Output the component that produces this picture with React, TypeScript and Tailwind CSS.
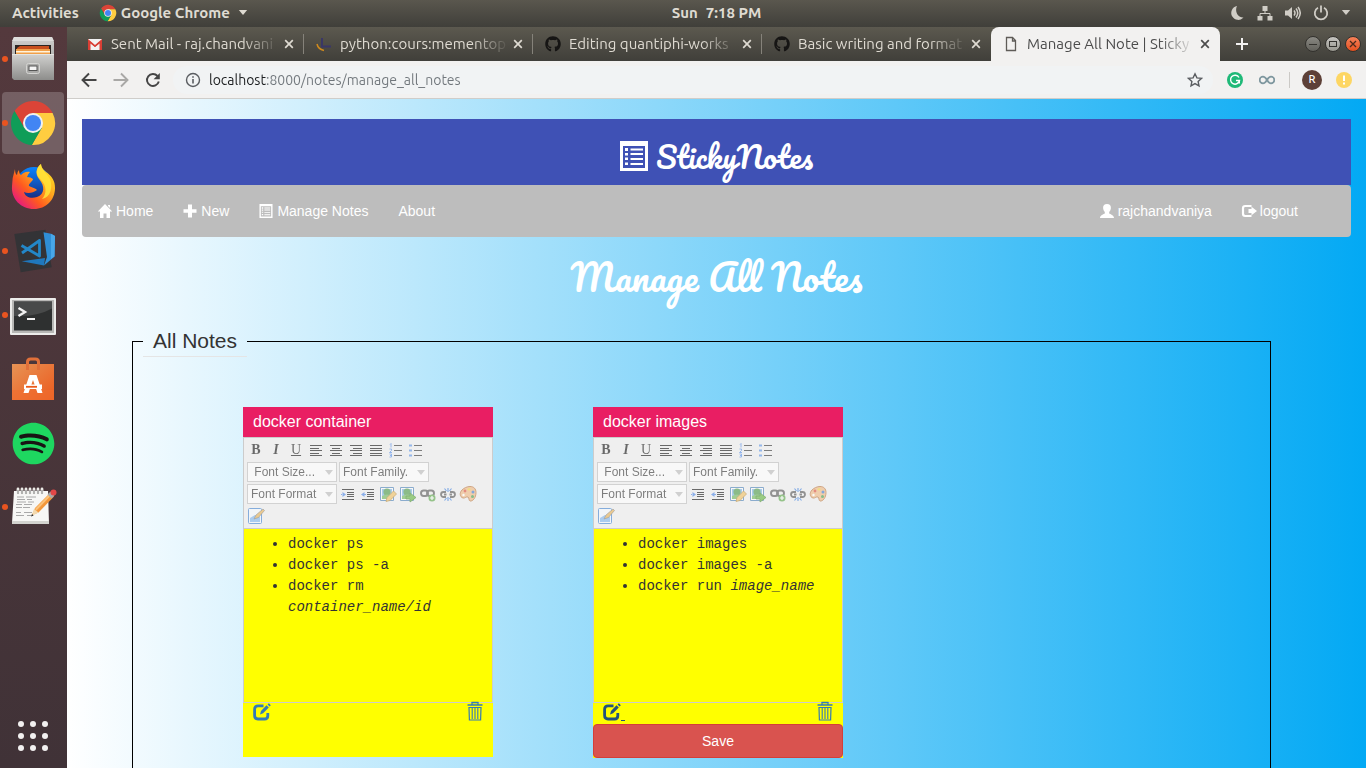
import type { ReactNode } from "react";
import { FaGithub, FaSpotify } from "react-icons/fa";

const uiFont = "font-['Ubuntu','Open_Sans','Noto_Sans',sans-serif]";

/* ---------- Shared logos ---------- */

function ChromeLogo({ className }: { className: string }) {
  return (
    <svg viewBox="0 0 48 48" className={className} aria-hidden="true">
      <path d="M5.55 12.02A22 22 0 0 1 43.6 14H24L15.34 29Z" fill="#db4437" />
      <path d="M43.6 14A22 22 0 0 1 22.85 45.97L32.66 29L24 14Z" fill="#ffcd40" />
      <path d="M22.85 45.97A22 22 0 0 1 5.55 12.02L15.34 29H32.66Z" fill="#0f9d58" />
      <circle cx="24" cy="24" r="10" fill="#f1f1f1" />
      <circle cx="24" cy="24" r="8" fill="#4285f4" />
    </svg>
  );
}

/* ---------- Desktop top bar ---------- */

function TopBar() {
  return (
    <header className={`grid h-[27px] shrink-0 grid-cols-[1fr_auto_1fr] items-center bg-linear-to-b from-[#5a574e] to-[#403f3a] pb-0.5 text-[15px] leading-5 font-bold text-[#dfdbd2] ${uiFont}`}>
      <div className="flex items-center">
        <button className="pl-3">Activities</button>
        <button className="ml-5 flex items-center gap-1">
          <ChromeLogo className="size-[18px]" />
          <span>Google Chrome</span>
          <svg viewBox="0 0 10 6" className="ml-1 h-[5px] w-[10px]" aria-hidden="true">
            <path d="M0 0h10L5 6z" fill="#dfdbd2" />
          </svg>
        </button>
      </div>
      <button className="flex gap-2 pl-[67px]">
        <span>Sun</span>
        <span>7:18 PM</span>
      </button>
      <div className="flex items-center justify-end gap-3 pr-[15px]">
        <svg viewBox="0 0 16 16" className="size-4" aria-label="Night mode">
          <path d="M8 1A7 7 0 1 0 14.5 12.5C8.500 13 5.500 6 8 1z" fill="#d0cdc6" />
        </svg>
        <svg viewBox="0 0 16 16" className="size-4" aria-label="Network">
          <path d="M5.500 1h5v5h-5zM0.500 11h5v4.500h-5zM10.500 11h5v4.500h-5z" fill="#d0cdc6" />
          <path d="M8 6v2.500M3 11V8.500h10V11" fill="none" stroke="#d0cdc6" />
        </svg>
        <svg viewBox="0 0 16 16" className="size-4" aria-label="Volume">
          <path d="M0 5.500h3L7 2v12L3 10.500H0z" fill="#d0cdc6" />
          <path d="M9 5.500q2 2.500 0 5M11 3.500q3.500 4.500 0 9M13 2q4.500 6 0 12" fill="none" stroke="#d0cdc6" strokeWidth="1.500" />
        </svg>
        <svg viewBox="0 0 16 16" className="size-4" aria-label="Power">
          <path d="M5 2.800a6.200 6.200 0 1 0 6 0M8 0.500v7" fill="none" stroke="#d0cdc6" strokeWidth="1.800" />
        </svg>
        <svg viewBox="0 0 10 6" className="h-[5px] w-[10px]" aria-hidden="true">
          <path d="M0 0h10L5 6z" fill="#d0cdc6" />
        </svg>
      </div>
    </header>
  );
}

/* ---------- Dock ---------- */

function FilesIcon() {
  return (
    <svg viewBox="0 0 48 48" className="size-12" aria-hidden="true">
      <defs>
        <linearGradient id="cab" x1="0" y1="0" x2="0" y2="1">
          <stop offset="0" stopColor="#d2d2d0" />
          <stop offset="1" stopColor="#8d8d8b" />
        </linearGradient>
      </defs>
      <path d="M5 2h38l2 5v36H3V7z" fill="url(#cab)" />
      <path d="M5 2h38l2 4H3z" fill="#dededc" />
      <rect x="6" y="10" width="36" height="12" fill="#2c2623" />
      <path d="M8 13l3-2h29v9H8z" fill="#c8501e" />
      <path d="M7 14h34v7H7z" fill="#f0a04a" />
      <path d="M7 16h34v1.500H7z" fill="#fff3dc" />
      <path d="M3 19h42v26H5l-2-2z" fill="url(#cab)" />
      <path d="M3 19h42v1H3z" fill="#e4e4e2" />
      <rect x="17.500" y="28.500" width="13" height="10" rx="2" fill="#a9a9a7" stroke="#d5d5d3" />
      <rect x="20" y="31" width="8" height="4.500" fill="#f4f4f4" stroke="#555" />
    </svg>
  );
}

function FirefoxIcon() {
  return (
    <svg viewBox="0 0 48 48" className="size-12" aria-hidden="true">
      <defs>
        <linearGradient id="fxBody" x1="0.900" y1="0.100" x2="0.100" y2="0.900">
          <stop offset="0" stopColor="#ffe226" />
          <stop offset="0.350" stopColor="#ffa51e" />
          <stop offset="0.650" stopColor="#ff5a1f" />
          <stop offset="1" stopColor="#e31587" />
        </linearGradient>
        <linearGradient id="fxGlobe" x1="0" y1="0" x2="0" y2="1">
          <stop offset="0" stopColor="#0a84ff" />
          <stop offset="1" stopColor="#1c2170" />
        </linearGradient>
      </defs>
      <circle cx="25" cy="22" r="18" fill="url(#fxGlobe)" />
      <path d="M6 6Q3 15 3 23C2 36 12 46 25 46C37 46 46 37 46 25C46 18 43 13 37 9Q32 5 32 1C27 5 26 11 30 16C36 23 36 31 28 34C22 36 16 34 15 29C19 31 24 30 28 27C25 24 23 25 20 23C19 21 24 18 24 16Q22 14 18 14Q19 11 21 9C17 8 14 10 12 12Q10 11 10 7Q8 9 8 12Q6 11 6 6Z" fill="url(#fxBody)" />
      <path d="M32 1C27 5 26 11 31 16C38 22 38 31 33 36C42 34 44 24 41 16C38 10 32 7 32 1Z" fill="#ffe43a" opacity="0.850" />
    </svg>
  );
}

function CodeIcon() {
  return (
    <svg viewBox="0 0 48 48" className="size-12" aria-hidden="true">
      <path d="M5.300 7L36.500 2.700L42.700 40.300L11.700 45.300Z" fill="#333336" />
      <path d="M12.700 34.300L36 31L35 38.500Z" fill="#1f78bd" />
      <path d="M34.500 5.300L42 6.700L46 9L45.500 29.500L35 38.500L38 30Z" fill="#2f8fd6" />
      <path d="M42 6.700L46 9L45.500 29.500L42 32Z" fill="#48a6e8" />
      <path d="M12.500 18.500L30.500 29V13.500L13 26" fill="none" stroke="#2387c8" strokeWidth="2.800" strokeLinejoin="round" />
    </svg>
  );
}

function TerminalIcon() {
  return (
    <svg viewBox="0 0 48 48" className="size-12" aria-hidden="true">
      <rect x="1" y="7" width="46" height="37" rx="1" fill="#ececea" />
      <rect x="3" y="9" width="42" height="33" fill="#b7b7b5" />
      <rect x="5" y="10.500" width="38" height="29" fill="#2e3030" />
      <path d="M5 10.500h38v7Q28 26 5 25z" fill="#484a4a" />
      <path d="M9.500 17l6.500 4-6.500 4" fill="none" stroke="#f2f2f2" strokeWidth="2.400" />
      <path d="M18 28h8" stroke="#f2f2f2" strokeWidth="2" />
    </svg>
  );
}

function SoftwareIcon() {
  return (
    <svg viewBox="0 0 48 48" className="size-12" aria-hidden="true">
      <defs>
        <linearGradient id="bag" x1="0" y1="0" x2="1" y2="1">
          <stop offset="0" stopColor="#e79355" />
          <stop offset="1" stopColor="#ec5a1d" />
        </linearGradient>
      </defs>
      <path d="M3 9h42v36H3z" fill="url(#bag)" />
      <path d="M3 35h42v10H3z" fill="#f06c2e" opacity="0.600" />
      <path d="M18.500 15V7q0-3 3-3h5q3 0 3 3v8" fill="none" stroke="#e0703a" strokeWidth="3" />
      <path d="M20.500 20h7l6 18h-5l-4.500-13-4.500 13h-5z" fill="#fff" />
      <path d="M15 29.500h18v4.500H15z" fill="#fff" />
      <path d="M17 31.800h11" stroke="#ea5a1a" strokeWidth="1.800" />
    </svg>
  );
}

function NotepadIcon() {
  return (
    <svg viewBox="0 0 48 48" className="size-12" aria-hidden="true">
      <path d="M5 8h34l1 32H3z" fill="#f7f7f5" />
      <path d="M3 38h37v3H3z" fill="#d3d3cf" />
      <path d="M8 14h7m2 0h10M8 16.500h8m2 0h5M8 19h9m2 0h6M7 21.500h6m2 0h8M7 24.500h6m1 0h7M7 29.500h5m3 0h8M7 32.500h8m3 0h4" stroke="#a9a9a9" strokeWidth="1" />
      <path d="M9 6v4M13 6v4M17 6v4M21 6v4M25 6v4M29 6v4M33 6v4" stroke="#ecece8" strokeWidth="2.800" strokeLinecap="round" />
      <path d="M9 7v4M13 7v4M17 7v4M21 7v4M25 7v4M29 7v4M33 7v4" stroke="#777" strokeWidth="1" />
      <path d="M23 32l3-7 15-15 4 3.500-15.500 16z" fill="#f3973a" />
      <path d="M26 26l15-15.500 1.500 1.500-15 15.500z" fill="#fbc27a" />
      <path d="M22.500 33l2.500-7 4.500 3.500z" fill="#f3d9ae" />
      <path d="M22 33.500l1-2.500 1.600 1.600z" fill="#222" />
      <path d="M38.500 11.500l3-3 4 4-3 3z" fill="#aaa" />
      <circle cx="44.500" cy="9.500" r="3" fill="#e24747" />
    </svg>
  );
}

const dockItems: { name: string; running: boolean; active?: boolean; icon: ReactNode }[] = [
  { name: "Files", running: true, icon: <FilesIcon /> },
  { name: "Google Chrome", running: true, active: true, icon: <ChromeLogo className="size-12" /> },
  { name: "Firefox", running: false, icon: <FirefoxIcon /> },
  { name: "Visual Studio Code", running: true, icon: <CodeIcon /> },
  { name: "Terminal", running: true, icon: <TerminalIcon /> },
  { name: "Ubuntu Software", running: false, icon: <SoftwareIcon /> },
  {
    name: "Spotify",
    running: false,
    icon: (
      <span className="block bg-[radial-gradient(closest-side,#191414_85%,transparent_86%)]">
        <FaSpotify className="block size-[43px] text-[#1ed760]" />
      </span>
    ),
  },
  { name: "Text Editor", running: true, icon: <NotepadIcon /> },
];

function Dock() {
  return (
    <nav aria-label="Dock" className="flex w-[67px] shrink-0 flex-col justify-between bg-linear-to-b from-[#54393d] to-[#403237] pt-px pb-[17px]">
      <ul className="flex flex-col gap-0.5">
        {dockItems.map((item) => (
          <li key={item.name}>
            <button
              aria-label={item.name}
              className={`relative ml-0.5 flex size-[62px] items-center justify-center rounded ${item.active ? "bg-white/20" : ""}`}
            >
              {item.running && <span className="absolute top-[28px] left-0 size-1.5 rounded-full bg-[#e95420]" />}
              {item.icon}
            </button>
          </li>
        ))}
      </ul>
      <button aria-label="Show Applications" className="ml-[18px] grid w-fit grid-cols-3 gap-1.5">
        {Array.from({ length: 9 }, (_, i) => (
          <span key={i} className="size-1.5 rounded-full bg-[#f2f0f0]" />
        ))}
      </button>
    </nav>
  );
}

/* ---------- Browser chrome ---------- */

function GmailIcon() {
  return (
    <svg viewBox="0 0 16 16" className="size-4" aria-hidden="true">
      <path d="M1 3h14v11H1z" fill="#f2f2f2" />
      <path d="M1 14V4l7 5.500L15 4v10h-2.500V7.500L8 11 3.500 7.500V14z" fill="#d93f35" />
      <path d="M1 3l7 6 7-6v2l-7 6-7-6z" fill="#d93f35" />
    </svg>
  );
}

function SwooshIcon() {
  return (
    <svg viewBox="0 0 16 16" className="size-4" aria-hidden="true">
      <path d="M6 2v8.500h9" fill="none" stroke="#3a3766" strokeWidth="2" />
      <path d="M1 8q1 5 7 6.500" fill="none" stroke="#d08a1c" strokeWidth="1.500" />
    </svg>
  );
}

function PageIcon() {
  return (
    <svg viewBox="0 0 16 16" className="size-4" aria-hidden="true">
      <path d="M3.500 1.500h6l3 3v10h-9zM9.500 1.500v3.500h3" fill="none" stroke="#5f5c58" strokeWidth="1.300" />
    </svg>
  );
}

const tabs: { title: string; icon: ReactNode; active?: boolean }[] = [
  { title: "Sent Mail - raj.chandvani", icon: <GmailIcon /> },
  { title: "python:cours:mementop", icon: <SwooshIcon /> },
  { title: "Editing quantiphi-works", icon: <FaGithub className="size-4 text-[#161514]" /> },
  { title: "Basic writing and format", icon: <FaGithub className="size-4 text-[#161514]" /> },
  { title: "Manage All Note | Sticky", icon: <PageIcon />, active: true },
];

function TabStrip() {
  return (
    <div className={`flex h-[34px] shrink-0 items-stretch bg-linear-to-b from-[#5c594f] to-[#403f3a] pl-2 text-[15px] leading-5 ${uiFont}`}>
      {tabs.map((tab, i) => (
        <div
          key={tab.title}
          className={`flex max-w-[229px] min-w-0 flex-1 items-center ${
            tab.active ? "rounded-t-lg bg-[#f2f1f0] text-[#4c4c4c]" : "text-[#dfdbd2]"
          }`}
        >
          <a href="#" className="flex min-w-0 flex-1 items-center gap-2 pl-3">
            <span className="shrink-0">{tab.icon}</span>
            <span className="min-w-0 flex-1 overflow-hidden whitespace-nowrap [mask-image:linear-gradient(to_right,black_78%,transparent)]">
              {tab.title}
            </span>
          </a>
          <button aria-label="Close tab" className="ml-1 pr-[9px]">
            <svg viewBox="0 0 10 10" className="size-2.5">
              <path d="M1.200 1.200l7.600 7.600M8.800 1.200L1.200 8.800" stroke="currentColor" strokeWidth="1.700" />
            </svg>
          </button>
          <span className={`h-5 w-px ${i < 3 ? "bg-[#85827a]" : ""}`} />
        </div>
      ))}
      <button aria-label="New tab" className="px-4 text-[#f2f1f0]">
        <svg viewBox="0 0 12 12" className="size-3">
          <path d="M6 0v12M0 6h12" stroke="currentColor" strokeWidth="2" />
        </svg>
      </button>
      <div className="ml-auto flex items-center gap-1 pr-[5px]">
        <button aria-label="Minimize" className="flex size-4 items-center justify-center rounded-full border border-[#33322e] bg-linear-to-b from-[#8a8983] to-[#62615b]">
          <span className="h-px w-2 bg-[#33322e]" />
        </button>
        <button aria-label="Maximize" className="flex size-4 items-center justify-center rounded-full border border-[#33322e] bg-linear-to-b from-[#c6c5c1] to-[#98978f]">
          <span className="h-1.5 w-2 border border-[#33322e]" />
        </button>
        <button aria-label="Close" className="flex size-4 items-center justify-center rounded-full border border-[#33322e] bg-linear-to-b from-[#f68158] to-[#e3501d]">
          <svg viewBox="0 0 8 8" className="size-2">
            <path d="M1 1l6 6M7 1L1 7" stroke="#4a2a1c" strokeWidth="1.300" />
          </svg>
        </button>
      </div>
    </div>
  );
}

function AddressBar() {
  return (
    <div className={`flex h-[38px] shrink-0 items-center border-b border-[#cfcdca] bg-[#f2f1f0] pr-[14px] pl-3.5 text-sm ${uiFont}`}>
      <div className="flex items-center gap-4">
        <button aria-label="Back" className="text-[#454545]">
          <svg viewBox="0 0 16 16" className="size-4">
            <path d="M15.500 8H2M8 1.500L1.500 8 8 14.500" fill="none" stroke="currentColor" strokeWidth="1.900" />
          </svg>
        </button>
        <button aria-label="Forward" className="text-[#a9a8a6]">
          <svg viewBox="0 0 16 16" className="size-4">
            <path d="M0.500 8H14M8 1.500L14.500 8 8 14.500" fill="none" stroke="currentColor" strokeWidth="1.900" />
          </svg>
        </button>
        <button aria-label="Reload" className="text-[#454545]">
          <svg viewBox="0 0 16 16" className="size-4">
            <path d="M13.800 9.500A6 6 0 1 1 12.500 4" fill="none" stroke="currentColor" strokeWidth="1.900" />
            <path d="M14.800 1v6.200H8.600z" fill="currentColor" />
          </svg>
        </button>
      </div>
      <div className="ml-3 flex h-7 flex-1 items-center gap-2 rounded-full bg-[#f1f3f4] pr-2.5 pl-3">
        <svg viewBox="0 0 16 16" className="size-4 shrink-0" aria-label="Site information">
          <circle cx="8" cy="8" r="6.500" fill="none" stroke="#5a5d61" strokeWidth="1.400" />
          <path d="M8 7v4.500M8 4.200v1.600" stroke="#5a5d61" strokeWidth="1.600" />
        </svg>
        <input
          aria-label="Address"
          defaultValue="localhost:8000/notes/manage_all_notes"
          className="min-w-0 flex-1 bg-[linear-gradient(to_right,#1c1e20_58px,#70767b_58px)] bg-clip-text text-transparent outline-none"
        />
        <button aria-label="Bookmark this page">
          <svg viewBox="0 0 16 16" className="size-4">
            <path d="M8 1.800l1.900 4.100 4.500.5-3.300 3 .9 4.400L8 11.600l-4 2.200.9-4.400-3.300-3 4.500-.5z" fill="none" stroke="#5a5d61" strokeWidth="1.400" />
          </svg>
        </button>
      </div>
      <div className="flex items-center pl-3.5">
        <button aria-label="Grammarly">
          <svg viewBox="0 0 16 16" className="size-4">
            <circle cx="8" cy="8" r="8" fill="#1fb978" />
            <path d="M12 5.500A4.500 4.500 0 1 0 12.500 8.500H9M12.300 8.500v3" fill="none" stroke="#fff" strokeWidth="1.400" />
          </svg>
        </button>
        <button aria-label="Infinity" className="ml-4">
          <svg viewBox="0 0 16 16" className="size-4">
            <path d="M8 8C6.500 5.500 5.500 4.700 4 4.700a3.300 3.300 0 0 0 0 6.600C5.500 11.300 6.500 10.500 8 8S10.500 4.700 12 4.700a3.300 3.300 0 0 1 0 6.600C10.500 11.300 9.500 10.500 8 8z" fill="none" stroke="#7f979f" strokeWidth="1.700" />
          </svg>
        </button>
        <span className="ml-3.5 h-4 w-px bg-[#cbc9c6]" />
        <button aria-label="Profile" className="ml-3 flex size-5 items-center justify-center rounded-full bg-[#5d4037] text-[11px] font-medium text-white">
          R
        </button>
        <button aria-label="Update" className="ml-3.5">
          <svg viewBox="0 0 16 16" className="size-4">
            <circle cx="8" cy="8" r="8" fill="#fdd663" />
            <path d="M8 3.500v5.500M8 10.500v2" stroke="#fff" strokeWidth="2" />
          </svg>
        </button>
      </div>
    </div>
  );
}

/* ---------- Page icons ---------- */

function ListIcon({ className }: { className: string }) {
  return (
    <svg viewBox="0 0 28 30" className={className} aria-hidden="true">
      <path
        fillRule="evenodd"
        fill="currentColor"
        d="M0 0h28v30H0zM3 5v22h22V5zM5 7h3v3H5zM10.500 7.500H23v2H10.500zM5 12h3v2.500H5zM10.500 12H23v2H10.500zM5 16.500h3V19H5zM10.500 17H23v2H10.500zM5 21.500h3V24H5zM10.500 22H23v2H10.500z"
      />
    </svg>
  );
}

function HomeIcon() {
  return (
    <svg viewBox="0 0 14 14" className="size-3.5" aria-hidden="true">
      <path d="M7 0l7.300 7.600H12V14H8.500V9.500h-3V14H2V7.600H-.3zM10 1h2v3l-2-2z" fill="currentColor" />
    </svg>
  );
}

function PlusIcon() {
  return (
    <svg viewBox="0 0 14 14" className="size-3.5" aria-hidden="true">
      <path d="M5 .5h4v4.700h4.500v3.600H9v4.700H5V8.800H.5V5.200H5z" fill="currentColor" />
    </svg>
  );
}

function UserIcon() {
  return (
    <svg viewBox="0 0 14 14" className="size-3.5" aria-hidden="true">
      <path d="M7 0c2.600 0 4 1.500 3.900 4C10.800 6 9.900 7.300 9.200 8v1.500c1 .7 4.800 1.700 4.800 4.500H0c0-2.800 3.800-3.800 4.800-4.500V8C4.100 7.300 3.200 6 3.100 4 3 1.500 4.400 0 7 0z" fill="currentColor" />
    </svg>
  );
}

function LogoutIcon() {
  return (
    <svg viewBox="0 0 14 14" className="size-3.5 overflow-visible" aria-hidden="true">
      <path d="M9.500 2H3.200Q1 2 1 4.200v5.600Q1 12 3.200 12h6.300" fill="none" stroke="currentColor" strokeWidth="2.200" />
      <path d="M9.500 2.800L15 7l-5.500 4.200V8.900H6.500V5.100h3z" fill="currentColor" />
    </svg>
  );
}

function EditIcon() {
  return (
    <svg viewBox="0 0 18 18" className="h-[18px] w-[18px]" aria-hidden="true">
      <path d="M10.500 2.800H5Q1.600 2.800 1.600 6.200v6.400Q1.600 16 5 16h6.500q3.300 0 3.300-3.300V10" fill="none" stroke="currentColor" strokeWidth="2.800" />
      <path d="M7 11.500l1-3.500 5.500-5.700 2.300 2.300-5.700 5.700zM14.600 1.500L15.800.3l2 2-1.200 1.200z" fill="currentColor" />
    </svg>
  );
}

function TrashIcon() {
  return (
    <svg viewBox="0 0 16 20" className="h-5 w-4" aria-hidden="true">
      <path d="M5 3.500V1.500h6v2M0.500 4h15" fill="none" stroke="currentColor" strokeWidth="1.300" />
      <path d="M2 6.500h12l-.4 12.500H2.400z" fill="none" stroke="currentColor" strokeWidth="1.200" />
      <path d="M5.200 7v11M8 7v11M10.800 7v11" stroke="currentColor" strokeWidth="1.100" />
    </svg>
  );
}

/* ---------- Rich text toolbar ---------- */

function Tool({ label, children }: { label: string; children: ReactNode }) {
  return (
    <button aria-label={label} className="my-px flex size-5 items-center justify-center font-['Liberation_Serif',serif] text-sm text-[#111]">
      {children}
    </button>
  );
}

function Glyph({ children }: { children: ReactNode }) {
  return (
    <svg viewBox="0 0 20 20" className="size-5" aria-hidden="true">
      {children}
    </svg>
  );
}

function Picker({ label }: { label: string }) {
  return (
    <span className="relative mx-px my-px h-5 w-[90px] font-['Liberation_Sans',sans-serif] text-xs">
      <select aria-label={label.trim()} className="size-full appearance-none border border-[#bfbfbf] bg-white pl-[3px] text-[#333]">
        <option>{label}</option>
      </select>
      <svg viewBox="0 0 8 5" className="pointer-events-none absolute top-[8px] right-1 h-[5px] w-2" aria-hidden="true">
        <path d="M0 0h8L4 5z" fill="#bdbdbd" />
      </svg>
    </span>
  );
}

const picture = (
  <>
    <path d="M2.500 3.500h13v13h-13z" fill="#fff" stroke="#4a80b8" />
    <path d="M4 5h10v10H4z" fill="#7db5e8" />
    <circle cx="9" cy="8" r="3.600" fill="#4a9a44" />
    <path d="M4 12q5-3 10 0v3H4z" fill="#6db85a" />
  </>
);

function EditorToolbar() {
  return (
    <div className="border border-[#ccc] bg-[#efefef] px-0.5 py-px">
      <div className="flex flex-wrap opacity-60">
        <Tool label="Bold"><b>B</b></Tool>
        <Tool label="Italic"><b><i>I</i></b></Tool>
        <Tool label="Underline"><u>U</u></Tool>
        <Tool label="Align left">
          <Glyph><path d="M4 5.500h12M4 8.500h9M4 10.500h12M4 13.500h9M4 15.500h12" stroke="#111" /></Glyph>
        </Tool>
        <Tool label="Align center">
          <Glyph><path d="M4 5.500h12M6 8.500h8M4 10.500h12M6 13.500h8M4 15.500h12" stroke="#111" /></Glyph>
        </Tool>
        <Tool label="Align right">
          <Glyph><path d="M4 5.500h12M7 8.500h9M4 10.500h12M7 13.500h9M4 15.500h12" stroke="#111" /></Glyph>
        </Tool>
        <Tool label="Justify">
          <Glyph><path d="M4 5.500h12M4 8.500h12M4 10.500h12M4 13.500h12M4 15.500h12" stroke="#111" /></Glyph>
        </Tool>
        <Tool label="Ordered list">
          <Glyph>
            <path d="M8 5.500h8M8 10.500h8M8 15.500h8" stroke="#333" />
            <path d="M4 4.500l1-1v4M3.500 9h2v1.500l-2 2h2.500M3.500 14h2v3h-2M4 15.500h1.500" fill="none" stroke="#4a86e8" strokeWidth="0.900" />
          </Glyph>
        </Tool>
        <Tool label="Unordered list">
          <Glyph>
            <path d="M8 5.500h8M8 10.500h8M8 15.500h8" stroke="#333" />
            <path d="M3 4.500h3v2H3zM3 9.500h3v2H3zM3 14.500h3v2H3z" fill="#5b93e8" />
          </Glyph>
        </Tool>
        <Picker label={"\u00a0Font Size..."} />
        <Picker label="Font Family." />
        <Picker label="Font Format" />
        <Tool label="Indent">
          <Glyph>
            <path d="M4 5.500h12M9 8.500h7M9 10.500h7M9 12.500h7M4 15.500h12" stroke="#111" />
            <path d="M4.500 8v5L8 10.500zM3 10h2v1H3z" fill="#4a86e8" />
          </Glyph>
        </Tool>
        <Tool label="Outdent">
          <Glyph>
            <path d="M4 5.500h12M9 8.500h7M9 10.500h7M9 12.500h7M4 15.500h12" stroke="#111" />
            <path d="M6.500 8v5L3 10.500zM6 10h2v1H6z" fill="#4a86e8" />
          </Glyph>
        </Tool>
        <Tool label="Add image">
          <Glyph>
            {picture}
            <path d="M8 17.500l1-4 6.500-6.500 3 3-6.500 6.500z" fill="#f0c060" stroke="#a87820" strokeWidth="0.700" />
          </Glyph>
        </Tool>
        <Tool label="Upload image">
          <Glyph>
            {picture}
            <path d="M8 12h4V9l6 4.500-6 4.500v-3H8z" fill="#63b53e" stroke="#3d8523" strokeWidth="0.800" />
          </Glyph>
        </Tool>
        <Tool label="Add link">
          <Glyph>
            <rect x="3" y="6.500" width="7" height="5.500" rx="2.700" fill="none" stroke="#555" strokeWidth="1.900" />
            <rect x="9" y="6.500" width="7" height="5.500" rx="2.700" fill="none" stroke="#555" strokeWidth="1.900" />
            <circle cx="14" cy="14" r="3.500" fill="#5aa648" />
            <path d="M14 12v4M12 14h4" stroke="#fff" strokeWidth="1.200" />
          </Glyph>
        </Tool>
        <Tool label="Remove link">
          <Glyph>
            <path d="M8 8H5.500a2.500 2.500 0 0 0 0 5H8M12 8h2.500a2.500 2.500 0 0 1 0 5H12M6 10.500h2.500M11.500 10.500H14" fill="none" stroke="#555" strokeWidth="1.800" />
            <path d="M10 4v4M6.500 4.500L8.500 7M13.500 4.500L11.500 7M10 13v4M6.500 16.500L8.500 14M13.500 16.500L11.500 14" stroke="#3f82e0" strokeWidth="1.200" />
          </Glyph>
        </Tool>
        <Tool label="Text color">
          <Glyph>
            <path d="M12 2.500c4 0 6 2.500 6 6 0 5-3 9-6 8.500-1.500-.5-.5-3-2-4-1.500-.8-3 1.500-5 1C1.500 13 1.500 8.500 4 6c2-2 5-3.500 8-3.500z" fill="#f0b880" stroke="#b8723a" />
            <circle cx="7" cy="7" r="1.400" fill="#e04a38" />
            <circle cx="11" cy="5.300" r="1.400" fill="#f0d040" />
            <circle cx="15" cy="8" r="1.500" fill="#3d78d0" />
            <circle cx="14.500" cy="12.500" r="1.500" fill="#3f9c48" />
            <circle cx="5.500" cy="11" r="1.200" fill="#fff" />
          </Glyph>
        </Tool>
        <Tool label="Edit HTML">
          <Glyph>
            <rect x="2.500" y="2.500" width="13" height="15" rx="1" fill="#f4f9ff" stroke="#3f82d0" />
            <path d="M4 12l5-3 5 2v5H4z" fill="#7fb6ee" />
            <path d="M8 13l2-4 7-6 1.500 1.500-6 7z" fill="#e8b050" stroke="#666" strokeWidth="0.600" />
          </Glyph>
        </Tool>
      </div>
    </div>
  );
}

/* ---------- Notes ---------- */

type Line = { text: string; emphasis?: string };
type Note = { title: string; lines: Line[]; editing?: boolean };

const notes: Note[] = [
  {
    title: "docker container",
    lines: [{ text: "docker ps" }, { text: "docker ps -a" }, { text: "docker rm ", emphasis: "container_name/id" }],
  },
  {
    title: "docker images",
    lines: [{ text: "docker images" }, { text: "docker images -a" }, { text: "docker run ", emphasis: "image_name" }],
    editing: true,
  },
];

function NoteCard({ note }: { note: Note }) {
  return (
    <article className="min-h-[350px] w-[250px] bg-[#ffff00]">
      <h3 className="bg-[#e91e63] px-2.5 text-base leading-[30px] text-white">{note.title}</h3>
      <EditorToolbar />
      <div className="min-h-[174px] border border-t-0 border-[#ccc] px-1 py-[5px] font-['Liberation_Mono',monospace] text-sm leading-[21px]">
        <ul className="list-disc pl-10">
          {note.lines.map((line) => (
            <li key={line.text}>
              {line.text}
              {line.emphasis && <em>{line.emphasis}</em>}
            </li>
          ))}
        </ul>
      </div>
      <div className="flex h-[21px] items-end justify-between px-2.5 pb-[3px]">
        <a href="#" aria-label="Edit note" className={`flex items-end ${note.editing ? "text-[#23527c]" : "text-[#337ab7]"}`}>
          <EditIcon />
          {note.editing && <span className="h-px w-1 bg-[#23527c]" />}
        </a>
        <a href="#" aria-label="Delete note" className="text-[#337ab7]">
          <TrashIcon />
        </a>
      </div>
      {note.editing && (
        <button className="h-[34px] w-full rounded border border-[#d43f3a] bg-[#d9534f] text-sm text-white">Save</button>
      )}
    </article>
  );
}

function NavLink({ icon, children }: { icon?: ReactNode; children: ReactNode }) {
  return (
    <li>
      <a href="#" className="flex items-center gap-1 px-[15px] leading-5">
        {icon}
        {children}
      </a>
    </li>
  );
}

const scriptFont = "font-['Pacifico',cursive] font-normal";

function NotesPage() {
  return (
    <main className="min-h-0 flex-1 overflow-y-auto bg-linear-to-r/srgb from-white to-[#03a9f4] px-[15px] pt-5 font-['Liberation_Sans',Arial,sans-serif] text-sm text-[#333] [scrollbar-width:none]">
      <div className="flex h-[66px] items-center justify-center gap-2 bg-[#3f51b5] pt-2 text-white">
        <ListIcon className="h-[30px] w-7" />
        <h1 className={`pt-0.5 text-[30px] leading-10 ${scriptFont}`}>StickyNotes</h1>
      </div>
      <nav aria-label="Main" className="flex h-[52px] items-center justify-between rounded bg-[#bdbdbd] pr-[38px] pl-px text-white">
        <ul className="flex">
          <NavLink icon={<HomeIcon />}>Home</NavLink>
          <NavLink icon={<PlusIcon />}>New</NavLink>
          <NavLink icon={<ListIcon className="h-3.5 w-3.5" />}>Manage Notes</NavLink>
          <NavLink>About</NavLink>
        </ul>
        <ul className="flex">
          <NavLink icon={<UserIcon />}>rajchandvaniya</NavLink>
          <NavLink icon={<LogoutIcon />}>logout</NavLink>
        </ul>
      </nav>
      <h2 className={`mt-4 mb-[25px] text-center text-[36px] leading-12 text-white ${scriptFont}`}>Manage All Notes</h2>
      <fieldset className="mr-20 ml-[50px] border border-black px-2.5">
        <legend className="border-b border-[#e5e5e5] px-2.5 text-[21px] leading-[30px]">All Notes</legend>
        <div className="flex flex-wrap items-start gap-[100px] px-[100px] pt-[50px] pb-24">
          {notes.map((note) => (
            <NoteCard key={note.title} note={note} />
          ))}
        </div>
      </fieldset>
    </main>
  );
}

export default function App() {
  return (
    <div className="flex h-screen flex-col overflow-hidden">
      <TopBar />
      <div className="flex min-h-0 flex-1">
        <Dock />
        <div className="flex min-w-0 flex-1 flex-col">
          <TabStrip />
          <AddressBar />
          <NotesPage />
        </div>
      </div>
    </div>
  );
}
